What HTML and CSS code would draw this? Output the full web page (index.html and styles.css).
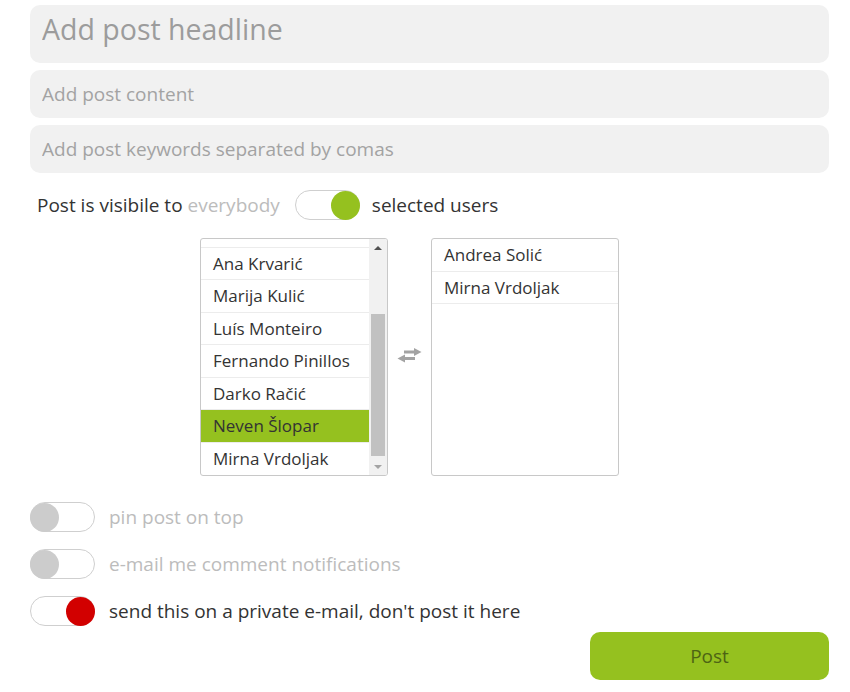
FILE: index.html
```html
<!DOCTYPE html>
<html lang="en">

<head>
    <meta charset="UTF-8">
    <meta name="viewport" content="width=device-width, initial-scale=1.0">
    <title>New post</title>
    <link rel="stylesheet" href="styles.css">
</head>

<body>
    <form class="post-form">
        <input class="field field-headline" type="text" placeholder="Add post headline">
        <input class="field" type="text" placeholder="Add post content">
        <input class="field" type="text" placeholder="Add post keywords separated by comas">

        <div class="visibility">
            <span>Post is visibile to <span class="muted">everybody</span></span>
            <span class="switch switch-on switch-green"><span class="knob"></span></span>
            <span>selected users</span>
        </div>

        <div class="pickers">
            <div class="user-list">
                <ul class="rows rows-scrolled">
                    <!-- row scrolled out of view -->
                    <li class="hidden-row"></li>
                    <li>Ana Krvarić</li>
                    <li>Marija Kulić</li>
                    <li>Luís Monteiro</li>
                    <li>Fernando Pinillos</li>
                    <li>Darko Račić</li>
                    <li class="selected">Neven Šlopar</li>
                    <li>Mirna Vrdoljak</li>
                </ul>
                <div class="scrollbar">
                    <span class="arrow arrow-up"></span>
                    <div class="track"><span class="thumb"></span></div>
                    <span class="arrow arrow-down"></span>
                </div>
            </div>

            <div class="swap">
                <svg width="25" height="15" viewBox="0 0 25 15">
                    <polygon points="7,2.5 17,2.5 17,0 24.5,4 17,8 17,5.5 7,5.5" fill="#a3a3a3" />
                    <polygon points="18,9 8,9 8,6.5 0.5,10.5 8,14.5 8,12 18,12" fill="#a3a3a3" />
                </svg>
            </div>

            <div class="user-list">
                <ul class="rows">
                    <li>Andrea Solić</li>
                    <li>Mirna Vrdoljak</li>
                </ul>
            </div>
        </div>

        <div class="options">
            <label class="option">
                <span class="switch"><span class="knob"></span></span>
                <span class="muted">pin post on top</span>
            </label>
            <label class="option">
                <span class="switch"><span class="knob"></span></span>
                <span class="muted">e-mail me comment notifications</span>
            </label>
            <label class="option">
                <span class="switch switch-on switch-red"><span class="knob"></span></span>
                <span>send this on a private e-mail, don't post it here</span>
            </label>
        </div>

        <div class="actions">
            <button class="btn-post" type="button">Post</button>
        </div>
    </form>
</body>

</html>
```

FILE: styles.css
```css
body {
    margin: 0px;
    font-family: "Open Sans", "Noto Sans", sans-serif;
    color: #333;
    background: #fff;
}

.post-form {
    display: flex;
    flex-direction: column;
    padding: 5px 21px 10px 30px;
}

.field {
    box-sizing: border-box;
    height: 48px;
    margin: 0 0 7px 0;
    padding: 0 12px;
    border: none;
    border-radius: 10px;
    background: #f1f1f1;
    font-family: inherit;
    font-size: 19px;
    color: #333;
    outline: none;
}

.field::placeholder {
    color: #a3a3a3;
}

.field-headline {
    height: 58px;
    padding-bottom: 10px;
    font-size: 28.5px;
}

.field-headline::placeholder {
    color: #9c9c9c;
}

.muted {
    color: #bcbcbc;
}

/* toggle switch */
.switch {
    position: relative;
    display: inline-block;
    flex: none;
    box-sizing: border-box;
    width: 65px;
    height: 30px;
    border: 1px solid #cfcfcf;
    border-radius: 15px;
    background: #fff;
}

.switch .knob {
    position: absolute;
    top: 0px;
    left: -1px;
    width: 29px;
    height: 29px;
    border-radius: 50%;
    background: #cccccc;
}

.switch-on .knob {
    left: auto;
    right: -1px;
}

.switch-green .knob {
    background: #95c11f;
}

.switch-red .knob {
    background: #d20000;
}

.visibility {
    display: flex;
    align-items: center;
    margin-top: 10px;
    padding-left: 7px;
    font-size: 19px;
}

.visibility .switch {
    margin: 0 12px 0 15px;
}

/* user pickers */
.pickers {
    display: flex;
    align-items: stretch;
    margin: 18px 0 0 170px;
}

.user-list {
    display: flex;
    box-sizing: border-box;
    width: 188px;
    height: 238px;
    border: 1px solid #c8c8c8;
    border-radius: 3px;
    overflow: hidden;
}

.rows {
    flex: 1;
    display: flex;
    flex-direction: column;
    margin: 0;
    padding: 0;
    list-style: none;
    overflow: hidden;
}

.rows-scrolled {
    justify-content: flex-end;
}

.rows li {
    flex: none;
    box-sizing: border-box;
    height: 32.5px;
    padding: 0 12px;
    border-bottom: 1px solid #ececec;
    font-size: 17px;
    line-height: 31px;
    white-space: nowrap;
}

.rows li.hidden-row {
    height: 8px;
}

.rows-scrolled li:last-child {
    border-bottom: none;
}

.rows li.selected {
    background: #95c11f;
}

.scrollbar {
    display: flex;
    flex-direction: column;
    width: 18px;
    background: #f1f1f1;
}

.arrow {
    flex: none;
    height: 17px;
    display: flex;
    justify-content: center;
    align-items: center;
}

.arrow::after {
    content: "";
    border-left: 4px solid transparent;
    border-right: 4px solid transparent;
}

.arrow-up::after {
    border-bottom: 4px solid #505050;
}

.arrow-down::after {
    border-top: 4px solid #a3a3a3;
}

.track {
    flex: 1;
    display: flex;
    flex-direction: column;
    justify-content: flex-end;
    padding: 0 2px 2px 2px;
}

.thumb {
    height: 142px;
    background: #c1c1c1;
}

.swap {
    width: 43px;
    display: flex;
    justify-content: center;
    align-items: center;
}

.swap svg {
    margin-bottom: 4px;
}

/* options */
.options {
    display: flex;
    flex-direction: column;
    gap: 17px;
    margin-top: 26px;
}

.option {
    display: flex;
    align-items: center;
    gap: 14px;
    font-size: 19px;
}

.actions {
    display: flex;
    justify-content: flex-end;
    margin-top: 6px;
}

.btn-post {
    width: 239px;
    height: 48px;
    border: none;
    border-radius: 10px;
    background: #95c11f;
    font-family: inherit;
    font-size: 19px;
    color: #4d6414;
    cursor: pointer;
}
```
